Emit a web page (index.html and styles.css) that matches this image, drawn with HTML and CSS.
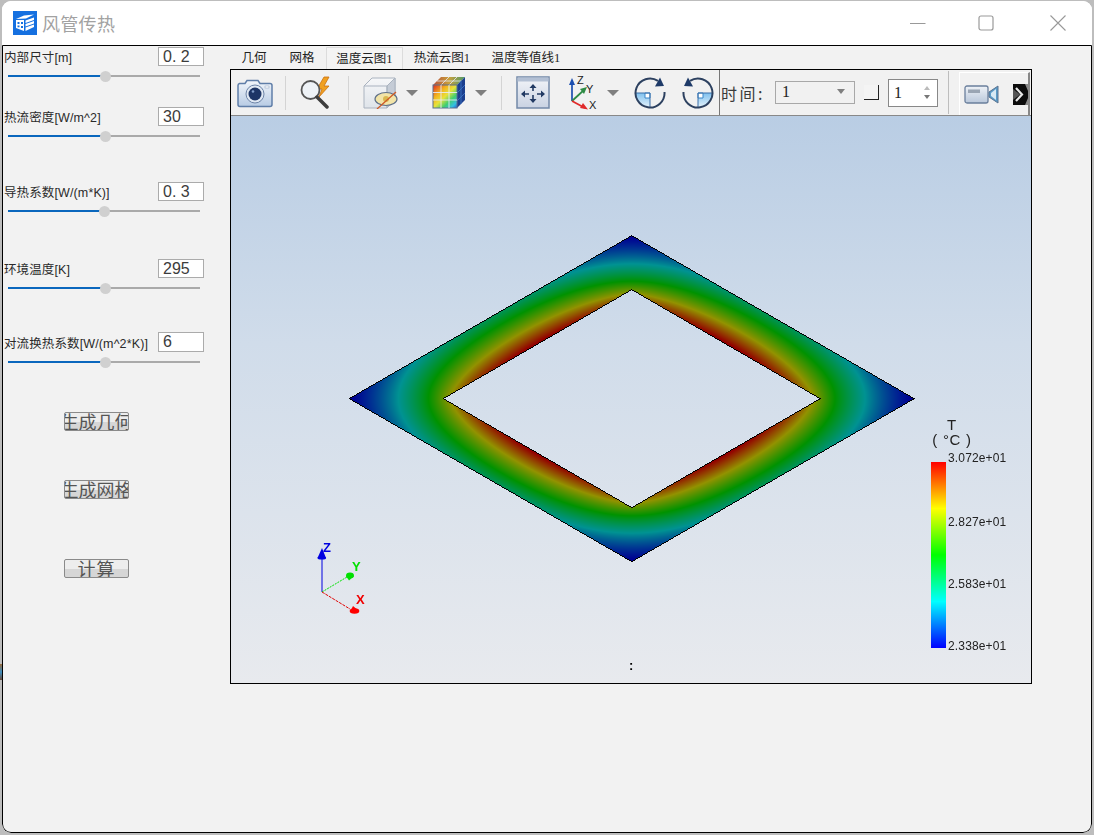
FILE: index.html
```html
<!DOCTYPE html>
<html lang="zh">
<head>
<meta charset="utf-8">
<title>风管传热</title>
<link rel="stylesheet" href="styles.css">
</head>
<body>
<div class="desk-fragment"></div>
<div class="window">
  <header class="titlebar">
    <svg class="app-icon" viewBox="0 0 24 24">
      <rect width="24" height="24" fill="#1570e0"/>
      <path d="M3 8 L11 4.5 L21 3.5 L13 7.5 Z" fill="#fff"/>
      <path d="M3 9 L11 9 L11 20 L3 17 Z" fill="#fff"/>
      <path d="M4.5 11h2v2h-2zM4.5 14.5h2v1.7h-2zM8 11h2v2H8zM8 15h2v2H8z" fill="#1570e0"/>
      <path d="M12.5 9.5 L21 6.5 V9 L12.5 12 Z M12.5 13 L21 10 V12.5 L12.5 15.5 Z M12.5 16.5 L21 13.5 V16 L12.5 20 Z" fill="#fff"/>
    </svg>
    <div class="app-title">风管传热</div>
    <div class="win-controls">
      <svg class="win-btn" viewBox="0 0 16 16"><path d="M0 8.5H15.5" stroke="#999" fill="none"/></svg>
      <svg class="win-btn win-max" viewBox="0 0 16 16"><rect x="1" y="1" width="14" height="14" rx="2" stroke="#999" stroke-width="1.2" fill="none"/></svg>
      <svg class="win-btn win-close" viewBox="0 0 16 16"><path d="M.5 .5L15.5 15.5M15.5 .5L.5 15.5" stroke="#999" stroke-width="1.1" fill="none"/></svg>
    </div>
  </header>
  <div class="content">
    <aside class="sidebar">
      <div class="param param-1">
        <div class="param-head"><span class="param-label">内部尺寸[m]</span><div class="field">0. 2</div></div>
        <div class="slider"><div class="slider-fill" style="width:97px"></div><div class="slider-thumb"></div></div>
      </div>
      <div class="param param-2">
        <div class="param-head"><span class="param-label">热流密度[W/m^2]</span><div class="field">30</div></div>
        <div class="slider"><div class="slider-fill" style="width:97px"></div><div class="slider-thumb"></div></div>
      </div>
      <div class="param param-3">
        <div class="param-head"><span class="param-label">导热系数[W/(m*K)]</span><div class="field">0. 3</div></div>
        <div class="slider"><div class="slider-fill" style="width:96px"></div><div class="slider-thumb"></div></div>
      </div>
      <div class="param param-4">
        <div class="param-head"><span class="param-label">环境温度[K]</span><div class="field">295</div></div>
        <div class="slider"><div class="slider-fill" style="width:97px"></div><div class="slider-thumb"></div></div>
      </div>
      <div class="param param-5">
        <div class="param-head"><span class="param-label">对流换热系数[W/(m^2*K)]</span><div class="field field-tall">6</div></div>
        <div class="slider"><div class="slider-fill" style="width:97px"></div><div class="slider-thumb"></div></div>
      </div>
      <button class="action action-1"><span>生成几何</span></button>
      <button class="action action-2"><span>生成网格</span></button>
      <button class="action action-3"><span class="wide">计算</span></button>
    </aside>
    <main class="main">
      <nav class="tabs">
        <div class="tab tab-2">几何</div>
        <div class="tab tab-2">网格</div>
        <div class="tab tab-active">温度云图1</div>
        <div class="tab tab-4">热流云图1</div>
        <div class="tab tab-5">温度等值线1</div>
      </nav>
      <section class="frame">
        <div class="toolbar">
          <svg class="ic ic-camera" viewBox="0 0 36 30">
            <defs><linearGradient id="gCam" x1="0" y1="0" x2="0" y2="1"><stop offset="0" stop-color="#f2f6fb"/><stop offset="1" stop-color="#b7cbe4"/></linearGradient></defs>
            <path d="M2.500 5.500H8l2-3h11l2 3h10a2 2 0 0 1 2 2v19a2 2 0 0 1-2 2H3a2 2 0 0 1-2-2v-19a2 2 0 0 1 1.500-2z" fill="url(#gCam)" stroke="#5f7ea8" stroke-width="1.500"/>
            <circle cx="18" cy="16" r="9" fill="#dfe8f3" stroke="#6d84a6"/>
            <circle cx="18" cy="16" r="6.500" fill="#1d3566"/>
            <circle cx="16" cy="13.500" r="1.300" fill="#7f9bc8"/>
            <rect x="28" y="8" width="4" height="2" fill="#fff" stroke="#8aa0bf" stroke-width=".5"/>
          </svg>
          <div class="sep sep-a"></div>
          <svg class="ic ic-mag" viewBox="0 0 35 33">
            <path d="M24 1L17 13h5l-3 8 10-11h-5l5-9z" fill="#f0a020" stroke="#c9700f" stroke-width=".8"/>
            <circle cx="10.500" cy="14" r="9" fill="#eef2f6" stroke="#555" stroke-width="1.800"/>
            <path d="M17 21L27 31" stroke="#3d3d3d" stroke-width="3.500" stroke-linecap="round"/>
          </svg>
          <div class="sep sep-b"></div>
          <svg class="ic ic-cube" viewBox="0 0 35 32">
            <defs><linearGradient id="gCube" x1="0" y1="0" x2="0" y2="1"><stop offset="0" stop-color="#f6f7f9"/><stop offset="1" stop-color="#dfe4ea"/></linearGradient></defs>
            <path d="M1 9L9 1H32V22L24 31H1Z" fill="url(#gCube)" stroke="#aab3bf"/>
            <path d="M24 9L32 1V22L24 31Z" fill="#c5ccd6" stroke="#aab3bf"/>
            <path d="M1 9H24V31" fill="none" stroke="#aab3bf"/>
            <ellipse cx="23" cy="22" rx="11" ry="6.500" fill="#f2e4a8" stroke="#5f7088" stroke-width="1.200"/>
            <circle cx="23" cy="22" r="3" fill="#d9b850"/>
            <path d="M14 32L33 15" stroke="#cf5a25" stroke-width="1.300"/>
          </svg>
          <div class="caret caret-a"></div>
          <svg class="ic ic-rainbow" viewBox="0 0 34 33">
            <defs>
              <linearGradient id="gRain" x1="0" y1="0" x2="1" y2="1"><stop offset="0" stop-color="#e02a20"/><stop offset=".3" stop-color="#f2b21e"/><stop offset=".5" stop-color="#e8e23a"/><stop offset=".7" stop-color="#40cf70"/><stop offset=".87" stop-color="#35bfe0"/><stop offset="1" stop-color="#1f5fd8"/></linearGradient>
              <linearGradient id="gTop" x1="0" y1="0" x2="1" y2="0"><stop offset="0" stop-color="#b8503a"/><stop offset=".5" stop-color="#c9a03c"/><stop offset="1" stop-color="#4a9a6a"/></linearGradient>
            </defs>
            <path d="M1 9L9 1H33L25 9Z" fill="url(#gTop)"/>
            <path d="M9 9L17 1M17 9L25 1M5 5H29" stroke="#e6ebf2" stroke-width=".8" fill="none"/>
            <path d="M25 9L33 1V24L25 32Z" fill="#1c3f8e"/>
            <path d="M29 5V28M25 17L33 9M25 25L33 17" stroke="#3f78c8" stroke-width=".8" fill="none"/>
            <rect x="1" y="9" width="24" height="23" fill="url(#gRain)" stroke="#5a708f"/>
            <path d="M9 9V32M17 9V32M1 16.500H25M1 24H25" stroke="#e6ebf2" stroke-width=".9" fill="none"/>
          </svg>
          <div class="caret caret-b"></div>
          <div class="sep sep-c"></div>
          <svg class="ic ic-fit" viewBox="0 0 34 33">
            <defs><linearGradient id="gFit" x1="0" y1="0" x2="0" y2="1"><stop offset="0" stop-color="#f3f5f9"/><stop offset="1" stop-color="#c9d2e2"/></linearGradient></defs>
            <rect x="1" y="1" width="32" height="31" fill="url(#gFit)" stroke="#7389a8" stroke-width="1.500"/>
            <rect x="1.500" y="1.500" width="31" height="4" fill="#b3c0d4"/>
            <g fill="none" stroke="#223a63" stroke-width="1.600">
              <path d="M17 12V15M17 19V24M8 18H13M21 18H26"/>
            </g>
            <g fill="#223a63">
              <path d="M17 8l3.500 4h-7zM17 27l-3.500-4h7zM5 18l4-3.500v7zM29 18l-4-3.500v7z"/>
            </g>
          </svg>
          <svg class="ic ic-axes" viewBox="0 0 30 35">
            <path d="M4 26V7" stroke="#1d4fb0" stroke-width="1.700" fill="none"/><path d="M4 3L7 10H1Z" fill="#1d4fb0"/>
            <path d="M4 26L16 15" stroke="#2e8b45" stroke-width="1.700" fill="none"/><path d="M19 12L16 19 12 14Z" fill="#2e8b45"/>
            <path d="M4 26L17 33" stroke="#e02a2a" stroke-width="1.700" fill="none"/><path d="M20 34.500L12 33 15 28Z" fill="#e02a2a"/>
            <text x="9" y="9" class="axis-tx">Z</text><text x="18" y="18" class="axis-tx">Y</text><text x="21" y="34" class="axis-tx">X</text>
          </svg>
          <div class="caret caret-c"></div>
          <svg class="ic ic-rot" viewBox="0 0 32 32">
            <defs><linearGradient id="gRot" x1="0" y1="0" x2="0" y2="1"><stop offset="0" stop-color="#7fc0ee"/><stop offset="1" stop-color="#e6f3fb"/></linearGradient></defs>
            <path d="M1.500 16a14.500 14.500 0 0 0 14.500 14.500V16Z" fill="url(#gRot)"/>
            <path d="M11 16H16V21H11Z" fill="#fff" stroke="#3a86c8"/>
            <path d="M1.500 16H16V30" stroke="#3a6ea8" fill="none"/>
            <path d="M30.500 15A14.500 14.500 0 1 1 24 3.900" fill="none" stroke="#2d4160" stroke-width="2"/>
            <path d="M30 9L21 9.500 26 0.500Z" fill="#1e3a68"/>
          </svg>
          <svg class="ic ic-rot ic-rot2" viewBox="0 0 32 32">
            <path d="M16 16V30.500A14.500 14.500 0 0 0 30.500 16Z" fill="url(#gRot)"/>
            <path d="M16 16H21V21H16Z" fill="#fff" stroke="#3a86c8"/>
            <path d="M30.500 16H16V30" stroke="#3a6ea8" fill="none"/>
            <path d="M1.500 15A14.500 14.500 0 1 0 8 3.900" fill="none" stroke="#2d4160" stroke-width="2"/>
            <path d="M2 9L11 9.500 6 0.500Z" fill="#1e3a68"/>
          </svg>
          <div class="sep-dark"></div>
          <div class="time-label">时间:</div>
          <div class="combo"><span>1</span><i class="caret caret-small"></i></div>
          <div class="check"></div>
          <div class="spin"><span>1</span><div class="spin-arrows"><i class="up"></i><i class="down"></i></div></div>
          <div class="sep sep-d"></div>
          <div class="video-panel">
            <svg class="ic ic-video" viewBox="0 0 35 19">
              <defs><linearGradient id="gVid" x1="0" y1="0" x2="0" y2="1"><stop offset="0" stop-color="#eef2f7"/><stop offset="1" stop-color="#b9c7da"/></linearGradient></defs>
              <rect x="1" y="1" width="23" height="17" rx="2" fill="url(#gVid)" stroke="#6a7f9c" stroke-width="1.300"/>
              <rect x="4" y="4.500" width="12" height="3.500" fill="#9aa5b3"/>
              <path d="M25 7L34 1V18L25 12Z" fill="#5a9bc8" stroke="#5a7390"/>
              <path d="M27 8L32 4V15L27 11Z" fill="#d7e9f4"/>
            </svg>
            <svg class="ic ic-more" viewBox="0 0 15 21">
              <rect width="15" height="21" fill="#0c0c0c"/>
              <path d="M0 5L7 10.500 0 16Z" fill="#555"/>
              <path d="M3 4L9 10.500 3 17" fill="none" stroke="#e8e8e8" stroke-width="2.200"/>
              <path d="M12 0H15V7ZM12 21H15V14Z" fill="#888"/>
            </svg>
          </div>
        </div>
        <div class="viewport">
          <canvas id="field" class="field-canvas" width="800" height="567"></canvas>
          <svg class="triad" viewBox="0 0 90 90">
            <path d="M32 62V24" stroke="#0000e0" stroke-width="1" fill="none"/>
            <path d="M32 62L57 47" stroke="#00e000" stroke-dasharray="2 1" fill="none"/>
            <path d="M32 62L60 79" stroke="#e00000" stroke-dasharray="3 1" fill="none"/>
            <path d="M32 18L36 28H27.500Z" fill="#0000e0"/>
            <ellipse cx="31.800" cy="28" rx="4.300" ry="1.500" fill="#0000e0"/>
            <ellipse cx="60" cy="45.500" rx="4" ry="3" fill="#00e000"/><path d="M56 46L64 46 59 50.500Z" fill="#00e000"/>
            <ellipse cx="64.500" cy="81" rx="4.800" ry="2.800" fill="#f00"/><path d="M63 76L69 81 60 82Z" fill="#f00"/>
            <text x="33" y="22" class="tri tri-z">Z</text>
            <text x="62" y="41" class="tri tri-y">Y</text>
            <text x="66" y="74" class="tri tri-x">X</text>
          </svg>
          <div class="legend-title"><span>T</span><span>( °C )</span></div>
          <div class="legend-bar"></div>
          <div class="legend-val lv-1">3.072e+01</div>
          <div class="legend-val lv-2">2.827e+01</div>
          <div class="legend-val lv-3">2.583e+01</div>
          <div class="legend-val lv-4">2.338e+01</div>
          <div class="colon">:</div>
        </div>
      </section>
    </main>
  </div>
</div>
<script src="script.js"></script>
</body>
</html>
```
FILE: styles.css
```css
* { box-sizing: border-box; }
html, body { margin: 0; padding: 0; }
body {
  width: 1094px;
  height: 835px;
  overflow: hidden;
  background: #bdbdbd;
  font-family: "Liberation Sans", "Noto Sans CJK SC", sans-serif;
}
.desk-fragment {
  position: absolute;
  left: 0;
  top: 664px;
  width: 2px;
  height: 16px;
  background: linear-gradient(#9a6a3a, #3f8fc0 50%, #6a4a3a);
}
.window {
  width: 1090px;
  height: 832px;
  margin: 1px 2px 2px;
  border-radius: 9px;
  overflow: hidden;
  display: flex;
  flex-direction: column;
  background: #fff;
}
.titlebar {
  flex: none;
  height: 44px;
  display: flex;
  align-items: center;
  padding-left: 11px;
  background: #fff;
}
.app-icon { width: 24px; height: 24px; flex: none; margin-top: 0; }
.app-title {
  margin-left: 5px;
  font-size: 18px;
  color: #a2a2a2;
  font-family: "Noto Sans CJK SC", sans-serif;
  letter-spacing: .3px;
}
.win-controls {
  margin-left: auto;
  display: flex;
  align-items: center;
  padding-right: 26px;
}
.win-btn { width: 16px; height: 16px; margin-left: 54px; }
.win-max { margin-left: 52px; }
.win-close { margin-left: 56px; }
.content {
  flex: 1;
  display: flex;
  border: 1px solid #000;
  border-radius: 0 0 9px 9px;
  background: #f2f2f2;
  min-height: 0;
}
.sidebar { width: 227px; flex: none; display: flex; flex-direction: column; }
.param-1 { margin-top: 1px; }
.param-2 { margin-top: 25px; }
.param-3 { margin-top: 40px; }
.param-4 { margin-top: 42px; }
.param-5 { margin-top: 38px; }
.param-head {
  display: flex;
  align-items: center;
  justify-content: space-between;
  padding: 0 26px 0 1px;
}
.param-label {
  font-size: 12.5px;
  color: #2a2a2a;
  white-space: nowrap;
  letter-spacing: .12px;
}
.field {
  width: 46px;
  height: 19px;
  border: 1px solid #ababab;
  background: #fff;
  font-size: 16px;
  line-height: 17px;
  padding-left: 4px;
  color: #3c3c3c;
  white-space: pre;
  flex: none;
}
.field-tall { height: 20px; line-height: 18px; }
.slider {
  position: relative;
  margin: 4px 0 0 5px;
  width: 192px;
  height: 12px;
  display: flex;
  align-items: center;
}
.slider::before {
  content: "";
  position: absolute;
  left: 0;
  right: 0;
  top: 5px;
  height: 2px;
  background: #aaa;
}
.slider-fill { position: relative; height: 2px; background: #0a67bd; flex: none; }
.slider-thumb {
  position: relative;
  width: 11px;
  height: 11px;
  border-radius: 50%;
  background: #d0d0d0;
  margin-left: -5px;
  flex: none;
}
.action {
  width: 65px;
  height: 19px;
  padding: 0;
  margin-left: 61px;
  border: 1px solid #8a8a8a;
  border-radius: 2px;
  background: linear-gradient(#ededed 0, #ededed 50%, #d6d6d6 50%, #d6d6d6 100%);
  display: flex;
  justify-content: center;
  overflow: hidden;
  font-family: "Noto Sans CJK SC", sans-serif;
  font-size: 18px;
  line-height: 17px;
  color: #555;
}
.action span { flex: none; white-space: nowrap; }
.action span.wide { letter-spacing: 1px; }
.action-1 { margin-top: 44px; }
.action-2 { margin-top: 49px; }
.action-3 { margin-top: 60px; }
.main { width: 802px; flex: none; display: flex; flex-direction: column; }
.tabs {
  height: 23px;
  display: flex;
  align-items: flex-end;
  flex: none;
}
.tab {
  height: 22px;
  line-height: 23px;
  text-align: center;
  font-family: "Liberation Serif", "Noto Sans CJK SC", serif;
  font-size: 12.5px;
  color: #222;
  white-space: nowrap;
}
.tab-2 { width: 48px; }
.tab-active {
  width: 77px;
  border: 1px solid #dcdcdc;
  border-bottom: 0;
  line-height: 22px;
  background: #f4f4f4;
}
.tab-4 { width: 78px; }
.tab-5 { width: 90px; }
.frame {
  width: 802px;
  height: 615px;
  border: 1px solid #000;
  display: flex;
  flex-direction: column;
  flex: none;
}
.toolbar {
  height: 46px;
  flex: none;
  display: flex;
  align-items: center;
  background: #f1f1f1;
  border-bottom: 1px solid #888;
}
.ic { display: block; flex: none; }
.ic-camera { width: 36px; height: 30px; margin-left: 6px; }
.sep { width: 1px; height: 34px; background: #d4d4d4; flex: none; }
.sep-a { margin-left: 12px; }
.ic-mag { width: 35px; height: 33px; margin-left: 14px; }
.sep-b { margin-left: 13px; }
.ic-cube { width: 35px; height: 32px; margin-left: 14px; }
.caret {
  flex: none;
  display: block;
  width: 0;
  height: 0;
  border-left: 6px solid transparent;
  border-right: 6px solid transparent;
  border-top: 6px solid #7f7f7f;
}
.caret-a { margin-left: 8px; }
.ic-rainbow { width: 34px; height: 33px; margin-left: 14px; }
.caret-b { margin-left: 9px; }
.sep-c { margin-left: 14px; }
.ic-fit { width: 34px; height: 33px; margin-left: 14px; }
.ic-axes { width: 30px; height: 35px; margin-left: 18px; }
.axis-tx { font: 11px "Liberation Sans", sans-serif; fill: #222; }
.caret-c { margin-left: 9px; }
.ic-rot { width: 32px; height: 32px; margin-left: 15px; }
.ic-rot2 { margin-left: 16px; }
.sep-dark { width: 1px; height: 45px; background: #777; margin-left: 5px; flex: none; align-self: flex-start; }
.time-label {
  width: 44px;
  margin-left: 1px;
  font-size: 16px;
  letter-spacing: 2.5px;
  color: #3a3a3a;
  white-space: nowrap;
  font-family: "Noto Sans CJK SC", sans-serif;
  flex: none;
}
.combo {
  width: 80px;
  height: 23px;
  margin-left: 10px;
  border: 1px solid #a8a8a8;
  display: flex;
  align-items: center;
  justify-content: space-between;
  padding: 0 9px 2px 6px;
  font-family: "Liberation Serif", serif;
  font-size: 16px;
  color: #222;
  flex: none;
}
.caret-small { border-left-width: 4.500px; border-right-width: 4.500px; border-top-width: 5px; }
.check {
  width: 15px;
  height: 15px;
  margin-left: 9px;
  border-right: 1px solid #222;
  border-bottom: 1px solid #222;
  background: #f4f4f4;
  flex: none;
}
.spin {
  width: 50px;
  height: 28px;
  margin-left: 9px;
  border: 1px solid #888;
  background: #fff;
  display: flex;
  align-items: center;
  justify-content: space-between;
  padding: 0 7px 0 5px;
  font-family: "Liberation Serif", serif;
  font-size: 16px;
  color: #222;
  flex: none;
}
.spin-arrows { display: flex; flex-direction: column; gap: 5px; }
.spin-arrows i { display: block; width: 0; height: 0; border-left: 3.500px solid transparent; border-right: 3.500px solid transparent; }
.spin-arrows .up { border-bottom: 4px solid #bbb; }
.spin-arrows .down { border-top: 4px solid #777; }
.sep-d { margin-left: 10px; height: 43px; background: #bdbdbd; }
.video-panel {
  width: 71px;
  height: 43px;
  margin-left: 10px;
  align-self: flex-end;
  border-top: 1px solid #fff;
  border-left: 1px solid #fff;
  border-right: 2px solid #888;
  display: flex;
  align-items: center;
  flex: none;
}
.ic-video { width: 35px; height: 19px; margin-left: 4px; }
.ic-more { width: 15px; height: 21px; margin-left: 14px; }
.viewport {
  position: relative;
  flex: 1;
  background: linear-gradient(#b9cde4 0, #d0dcea 40%, #e8eaee 100%);
  overflow: hidden;
}
.field-canvas { position: absolute; left: 0; top: 0; display: block; }
.triad { position: absolute; left: 59px; top: 414px; width: 90px; height: 90px; }
.tri { font: bold 13px "Liberation Sans", sans-serif; }
.tri-z { fill: #0000e0; }
.tri-y { fill: #00e000; }
.tri-x { fill: #f00000; }
.legend-title {
  position: absolute;
  left: 701px;
  top: 301px;
  width: 40px;
  display: flex;
  flex-direction: column;
  align-items: center;
  font-size: 15px;
  line-height: 15px;
  letter-spacing: .7px;
  color: #222;
  white-space: pre;
}
.legend-bar {
  position: absolute;
  left: 700px;
  top: 346px;
  width: 15px;
  height: 186px;
  background: linear-gradient(#f00 0, #ff0 25%, #0f0 50%, #0ff 75%, #00f 100%);
}
.legend-val {
  position: absolute;
  left: 717px;
  font-size: 12px;
  line-height: 14px;
  letter-spacing: .15px;
  color: #222;
  white-space: nowrap;
}
.lv-1 { top: 335px; }
.lv-2 { top: 399px; }
.lv-3 { top: 461px; }
.lv-4 { top: 523px; }
.colon {
  position: absolute;
  left: 398px;
  top: 542px;
  font-size: 13px;
  font-weight: bold;
  line-height: 16px;
  color: #000;
}
```
FILE: script.js
```js
(function () {
  var cv = document.getElementById('field');
  var ctx = cv.getContext('2d');
  var W = cv.width, H = cv.height;
  var cx = 400.25, cy = 282, a = 282.5, b = 163, ia = 188.5, ib = 109;

  // Steady conduction in a square ring: flux on the inner wall, convection on the outer wall.
  var N = 90, g = 0.0667, q = 0.333, T = new Float64Array(N * N);
  function hole(i, j) { return i >= 15 && i < 75 && j >= 15 && j < 75; }
  function out(i, j) { return i < 0 || j < 0 || i >= N || j >= N; }
  var nb = [[1, 0], [-1, 0], [0, 1], [0, -1]];
  for (var it = 0; it < 1500; it++) {
    for (var i = 0; i < N; i++) {
      for (var j = 0; j < N; j++) {
        if (hole(i, j)) continue;
        var s = 0, c = 0;
        for (var k = 0; k < 4; k++) {
          var p = i + nb[k][0], r = j + nb[k][1];
          if (out(p, r)) { c += g; }
          else if (hole(p, r)) { s += q; }
          else { s += T[p * N + r]; c += 1; }
        }
        T[i * N + j] += 1.9 * (s / c - T[i * N + j]);
      }
    }
  }
  var mn = Infinity, mx = -Infinity;
  for (var m = 0; m < N * N; m++) {
    var ii = Math.floor(m / N), jj = m % N;
    if (hole(ii, jj)) continue;
    if (T[m] < mn) mn = T[m];
    if (T[m] > mx) mx = T[m];
  }
  function sample(u, v) {
    var x = (u + 1) * 45 - 0.5, y = (v + 1) * 45 - 0.5;
    var x0 = Math.floor(x), y0 = Math.floor(y), fx = x - x0, fy = y - y0;
    var sum = 0, wt = 0;
    for (var dx = 0; dx < 2; dx++) for (var dy = 0; dy < 2; dy++) {
      var px = x0 + dx, py = y0 + dy;
      if (out(px, py) || hole(px, py)) continue;
      var w = (dx ? fx : 1 - fx) * (dy ? fy : 1 - fy) + 1e-6;
      sum += w * T[px * N + py]; wt += w;
    }
    return wt ? sum / wt : mn;
  }
  var V = 146;
  function colour(t) {
    t = Math.pow(Math.max(0, Math.min(1, t)), 1.06) * 4;
    var n = Math.min(3, Math.floor(t)), f = t - n;
    if (n === 0) return [0, f * V, V];
    if (n === 1) return [0, V, (1 - f) * V];
    if (n === 2) return [f * V, V, 0];
    return [V, (1 - f) * V, 0];
  }
  var img = ctx.createImageData(W, H), d = img.data;
  for (var py = 0; py < H; py++) {
    for (var px = 0; px < W; px++) {
      var dx = px - cx, dy = py - cy;
      var o = Math.abs(dx) / a + Math.abs(dy) / b;
      var inn = Math.abs(dx) / ia + Math.abs(dy) / ib;
      if (o > 1 || inn < 1) continue;
      var t = (sample(dx / a + dy / b, dx / a - dy / b) - mn) / (mx - mn);
      var col = colour(t), id = (py * W + px) * 4;
      d[id] = col[0]; d[id + 1] = col[1]; d[id + 2] = col[2]; d[id + 3] = 255;
    }
  }
  function line(x0, y0, x1, y1) {
    var n = Math.max(Math.abs(x1 - x0), Math.abs(y1 - y0));
    for (var i = 0; i <= n; i++) {
      var x = Math.round(x0 + (x1 - x0) * i / n), y = Math.round(y0 + (y1 - y0) * i / n);
      var id = (y * W + x) * 4;
      d[id] = 0; d[id + 1] = 0; d[id + 2] = 0; d[id + 3] = 255;
    }
  }
  function diamond(ha, hb) {
    line(cx - ha, cy, cx, cy - hb); line(cx, cy - hb, cx + ha, cy);
    line(cx + ha, cy, cx, cy + hb); line(cx, cy + hb, cx - ha, cy);
  }
  diamond(a, b); diamond(ia, ib);
  ctx.putImageData(img, 0, 0);
})();
```
